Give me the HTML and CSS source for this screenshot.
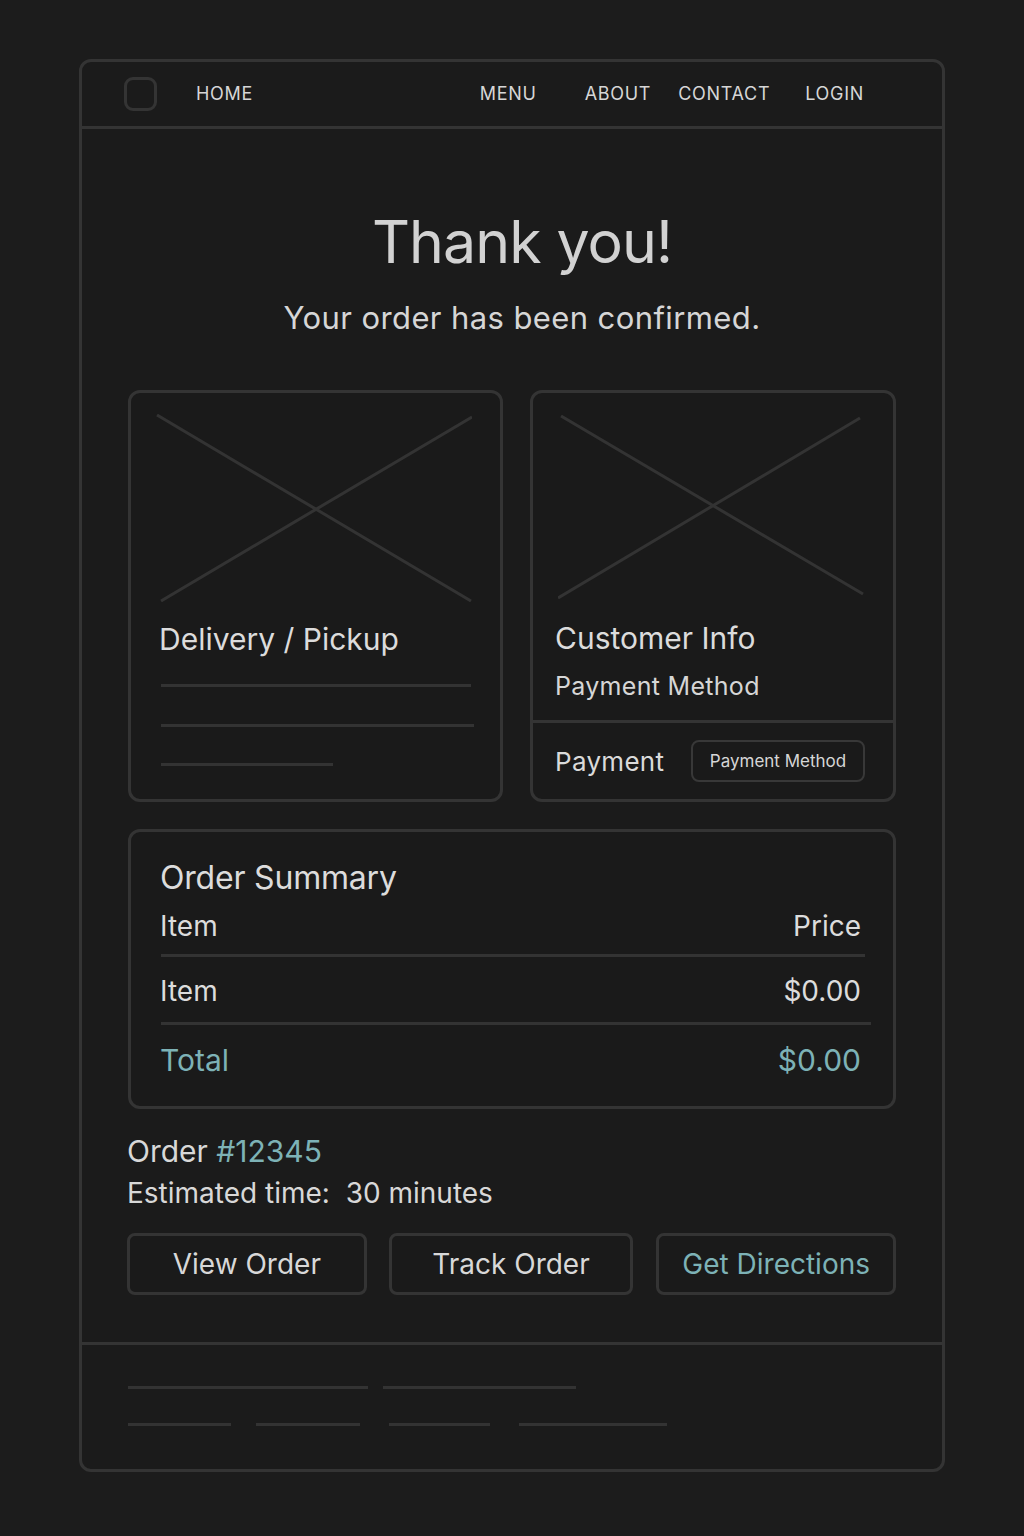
FILE: index.html
```html
<!DOCTYPE html>
<html lang="en">
<head>
<meta charset="utf-8">
<title>Order Confirmed</title>
<link rel="stylesheet" href="styles.css">
</head>
<body>
<div class="frame">
  <nav class="nav">
    <div class="logo"></div>
    <a class="nav-link home">HOME</a>
    <div class="nav-links">
      <a class="nav-link">MENU</a>
      <a class="nav-link">ABOUT</a>
      <a class="nav-link">CONTACT</a>
      <a class="nav-link">LOGIN</a>
    </div>
  </nav>
  <main class="main">
    <h1 class="title">Thank you!</h1>
    <p class="subtitle">Your order has been confirmed.</p>

    <div class="cards">
      <section class="card card-left">
        <svg class="ph ph-left" width="316" height="188" viewBox="0 0 316 188">
          <line x1="1" y1="1" x2="315" y2="187"/>
          <line x1="316" y1="3" x2="5" y2="187"/>
        </svg>
        <h2 class="card-title">Delivery / Pickup</h2>
        <div class="bar bar-1"></div>
        <div class="bar bar-2"></div>
        <div class="bar bar-3"></div>
      </section>
      <section class="card card-right">
        <div class="card-top">
          <svg class="ph ph-right" width="306" height="184" viewBox="0 0 306 184">
            <line x1="3" y1="1" x2="305" y2="179"/>
            <line x1="302" y1="3" x2="0" y2="183"/>
          </svg>
          <h2 class="card-title title-ci">Customer Info</h2>
          <p class="card-sub">Payment Method</p>
        </div>
        <div class="card-bottom">
          <span class="pay-label">Payment</span>
          <span class="pill">Payment Method</span>
        </div>
      </section>
    </div>

    <section class="summary">
      <h2 class="summary-title">Order Summary</h2>
      <div class="row row-head"><span>Item</span><span>Price</span></div>
      <div class="divider"></div>
      <div class="row row-item"><span>Item</span><span>$0.00</span></div>
      <div class="divider divider-wide"></div>
      <div class="row row-total"><span>Total</span><span>$0.00</span></div>
    </section>

    <p class="order-no">Order <span class="accent">#12345</span></p>
    <p class="eta">Estimated time:&nbsp; 30 minutes</p>

    <div class="actions">
      <button class="btn btn-view">View Order</button>
      <button class="btn btn-track">Track Order</button>
      <button class="btn btn-dir">Get Directions</button>
    </div>
  </main>
  <footer class="footer">
    <div class="f-row f-row-1">
      <span class="f-line fw-240"></span>
      <span class="f-line fw-193"></span>
    </div>
    <div class="f-row f-row-2">
      <span class="f-line fw-103"></span>
      <span class="f-line fw-104"></span>
      <span class="f-line fw-101"></span>
      <span class="f-line fw-148"></span>
    </div>
  </footer>
</div>
</body>
</html>
```
FILE: styles.css
```css
* { box-sizing: border-box; }

body {
  margin: 0;
  background: #1c1c1c;
  font-family: Inter, "Noto Sans", "Liberation Sans", sans-serif;
  color: #d9d9d9;
}

.frame {
  margin: 59px 0 0 79px;
  width: 866px;
  height: 1413px;
  border: 3px solid #343434;
  border-radius: 12px;
  display: flex;
  flex-direction: column;
  background: #1b1b1b;
}

/* NAV */
.nav {
  height: 67px;
  flex: none;
  border-bottom: 3px solid #343434;
  display: flex;
  align-items: center;
  padding: 0 78px 0 42px;
}
.logo {
  width: 33px;
  height: 34px;
  border: 3px solid #343434;
  border-radius: 9px;
}
.nav-link {
  font-size: 18px;
  letter-spacing: 0.7px;
  color: #d6d6d6;
  line-height: 20px;
}
.home { margin-left: 39px; }
.nav-links {
  margin-left: auto;
  display: flex;
}
.nav-links .nav-link:nth-child(2) { margin-left: 48px; }
.nav-links .nav-link:nth-child(3) { margin-left: 27px; }
.nav-links .nav-link:nth-child(4) { margin-left: 35px; }

/* MAIN */
.main {
  height: 1216px;
  flex: none;
  padding: 81px 46px 0 46px;
  border-bottom: 3px solid #343434;
}
.title {
  margin: 0;
  padding-left: 20px;
  text-align: center;
  font-size: 59px;
  line-height: 64px;
  font-weight: 400;
  color: #d2d2d2;
  letter-spacing: -0.9px;
}
.subtitle {
  margin: 24px 0 0;
  padding-left: 20px;
  text-align: center;
  font-size: 31px;
  line-height: 40px;
  color: #d6d6d6;
  letter-spacing: 0.4px;
}

.cards {
  margin-top: 52px;
  display: grid;
  grid-template-columns: 375px 1fr;
  gap: 27px;
  height: 412px;
}
.card {
  border: 3px solid #343434;
  border-radius: 12px;
  background: #1a1a1a;
}
.ph { display: block; }
.ph line { stroke: #333333; stroke-width: 3; }
.ph-left { margin: 21px 0 0 25px; }
.ph-right { margin: 22px 0 0 25px; }

.card-title {
  margin: 19px 0 0 28px;
  font-size: 30px;
  line-height: 36px;
  font-weight: 400;
  color: #dcdcdc;
}
.bar {
  height: 3px;
  background: #333333;
  margin-left: 30px;
}
.bar-1 { margin-top: 27px; width: 310px; }
.bar-2 { margin-top: 37px; width: 313px; }
.bar-3 { margin-top: 36px; width: 172px; }

.card-right {
  display: flex;
  flex-direction: column;
}
.card-top { border-bottom: 3px solid #343434; padding-bottom: 18px; }
.title-ci { margin: 21px 0 0 22px; }
.card-sub {
  margin: 14px 0 0 22px;
  font-size: 25px;
  line-height: 32px;
  color: #d6d6d6;
  letter-spacing: 0.3px;
}
.card-bottom {
  flex: 1;
  display: flex;
  align-items: center;
  padding: 0 28px 0 22px;
}
.pay-label {
  font-size: 26px;
  color: #dadada;
  letter-spacing: 0.3px;
}
.pill {
  margin-left: auto;
  height: 42px;
  width: 174px;
  border: 2px solid #383838;
  border-radius: 8px;
  display: flex;
  align-items: center;
  justify-content: center;
  font-size: 17px;
  color: #d6d6d6;
}

/* SUMMARY */
.summary {
  margin-top: 27px;
  height: 280px;
  border: 3px solid #343434;
  border-radius: 12px;
  background: #1a1a1a;
  padding: 26px 32px 0 29px;
}
.summary-title {
  margin: 0;
  font-size: 32px;
  line-height: 40px;
  font-weight: 400;
  color: #dcdcdc;
  letter-spacing: -0.2px;
}
.row {
  display: flex;
  justify-content: space-between;
  font-size: 28px;
  line-height: 36px;
  color: #dcdcdc;
}
.row-head { margin-top: 10px; }
.row-item { margin-top: 16px; }
.row-total {
  margin-top: 17px;
  font-size: 30px;
  color: #7db2b6;
}
.divider {
  margin: 10px 0 0 1px;
  height: 3px;
  background: #333333;
  width: 704px;
}
.divider-wide { margin-top: 13px; width: 710px; }

.order-no {
  margin: 24px 0 0 -1px;
  font-size: 30px;
  line-height: 36px;
  color: #d8d8d8;
}
.accent { color: #7db2b6; }
.eta {
  margin: 6px 0 0 -1px;
  font-size: 28px;
  line-height: 36px;
  color: #d8d8d8;
}

.actions {
  margin-top: 22px;
  display: flex;
  gap: 22px;
  margin-left: -1px;
}
.btn {
  height: 62px;
  border: 3px solid #343434;
  border-radius: 8px;
  background: #1a1a1a;
  font-family: inherit;
  font-size: 28px;
  color: #d8d8d8;
  padding: 0;
}
.btn-view { width: 240px; }
.btn-track { width: 245px; }
.btn-dir { width: 240px; color: #7db2b6; margin-left: 1px; }

/* FOOTER */
.footer {
  flex: 1;
  padding: 41px 0 0 46px;
}
.f-row { display: flex; }
.f-row-2 { margin-top: 34px; }
.f-line {
  display: block;
  height: 3px;
  background: #333333;
}
.fw-240 { width: 240px; }
.fw-193 { width: 193px; margin-left: 15px; }
.fw-103 { width: 103px; }
.fw-104 { width: 104px; margin-left: 25px; }
.fw-101 { width: 101px; margin-left: 29px; }
.fw-148 { width: 148px; margin-left: 29px; }
```
